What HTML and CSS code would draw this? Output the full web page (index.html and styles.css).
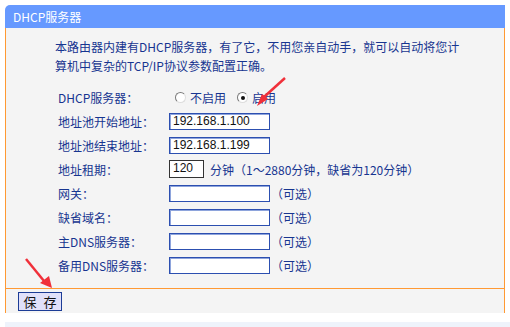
FILE: index.html
```html
<!DOCTYPE html>
<html>
<head>
<meta charset="utf-8">
<link rel="stylesheet" href="styles.css">
</head>
<body>
<div class="page">
  <div class="panel">
    <div class="head">DHCP服务器</div>
    <div class="body">
      <p class="intro">本路由器内建有DHCP服务器，有了它，不用您亲自动手，就可以自动将您计<br>算机中复杂的TCP/IP协议参数配置正确。</p>
      <div class="form">
        <div class="lbl">DHCP服务器：</div>
        <div class="ctl radios">
          <span class="radio"></span><span class="rtext">不启用</span>
          <span class="radio on"></span><span class="rtext">启用</span>
        </div>
        <div class="lbl">地址池开始地址：</div>
        <div class="ctl"><span class="inp">192.168.1.100</span></div>
        <div class="lbl">地址池结束地址：</div>
        <div class="ctl"><span class="inp">192.168.1.199</span></div>
        <div class="lbl">地址租期：</div>
        <div class="ctl"><span class="inp short">120</span><span class="note">分钟（1～2880分钟，缺省为120分钟）</span></div>
        <div class="lbl">网关：</div>
        <div class="ctl"><span class="inp"></span><span class="opt">（可选）</span></div>
        <div class="lbl">缺省域名：</div>
        <div class="ctl"><span class="inp"></span><span class="opt">（可选）</span></div>
        <div class="lbl">主DNS服务器：</div>
        <div class="ctl"><span class="inp"></span><span class="opt">（可选）</span></div>
        <div class="lbl">备用DNS服务器：</div>
        <div class="ctl"><span class="inp"></span><span class="opt">（可选）</span></div>
      </div>
    </div>
    <div class="foot"><button class="save"><span class="ch">保</span><span class="ch">存</span></button></div>
  </div>
  <div class="strip"></div>
  <svg class="arrow a1" width="40" height="36" viewBox="0 0 40 36"><path d="M33 2 L13 20 L16 23 L5 30 L10 18 L13 20 Z" fill="#f0303a"/><path d="M33 2 L12 21" stroke="#f0303a" stroke-width="2.5"/></svg>
  <svg class="arrow a2" width="40" height="40" viewBox="0 0 40 40"><path d="M4 4 L22 26" stroke="#f0303a" stroke-width="2.5"/><path d="M18 28 L27 21 L30 33 Z" fill="#f0303a"/></svg>
</div>
</body>
</html>
```
FILE: styles.css
```css
html, body { margin: 0; padding: 0; background: #fff; }
body { font-family: "Noto Sans CJK SC", "Liberation Sans", sans-serif; font-size: 12px; color: #173590; }
.page { position: relative; width: 510px; height: 327px; padding-top: 5px; box-sizing: border-box; }
.panel { margin-left: 5px; width: 500px; }
.head { height: 23px; line-height: 23px; background: #6699ff; color: #fff; padding-left: 8px; border-radius: 5px 0 0 0; font-size: 12px; }
.body { background: #f4f4f4; border-left: 1px solid #ff9933; border-right: 1px solid #ff9933; border-bottom: 1px solid #ff9933; padding: 9px 0 11px 0; }
.intro { margin: 0 0 10px 49px; line-height: 19px; }
.form { display: grid; grid-template-columns: 111px auto; grid-auto-rows: 24px; padding-left: 52px; }
.lbl, .ctl { display: flex; align-items: center; white-space: nowrap; }
.radios { padding-top: 1px; }
.radio { width: 9px; height: 9px; border-radius: 50%; border: 1px solid #7a7a7a; border-right-color: #ddd; border-bottom-color: #ddd; background: #fff; box-sizing: content-box; display: inline-flex; align-items: center; justify-content: center; margin: 0 4px 0 6px; flex: none; }
.radio.on::after { content: ""; width: 4px; height: 4px; border-radius: 50%; background: #111; }
.rtext { margin-right: 5px; font-size: 12px; }
.inp { display: inline-block; width: 96px; height: 15px; border: 1px solid #2c4fb0; box-shadow: inset 1px 1px 0 #8ea4dc; background: #fff; color: #111; font-family: "Liberation Sans", sans-serif; font-size: 12px; line-height: 15px; padding-left: 3px; box-sizing: content-box; }
.inp.short { width: 30px; height: 16px; border-color: #333; box-shadow: none; }
.note { margin-left: 6px; }
.opt { margin-left: 1px; }
.foot { background: #f4f4f4; border-left: 1px solid #ff9933; border-right: 1px solid #ff9933; height: 24px; padding: 3px 0 0 12px; box-sizing: border-box; }
.save { width: 44px; height: 19px; padding: 0; border: 1px solid #1c3c96; background: #e0e0fa; color: #111; font-family: "Noto Sans CJK SC", sans-serif; font-size: 13px; line-height: 17px; display: flex; align-items: center; justify-content: center; gap: 7px; }
.strip { margin: 9px 0 0 5px; height: 5px; background: #eef3fb; }
.arrow { position: absolute; }
.a1 { left: 252px; top: 76px; }
.a2 { left: 22px; top: 255px; }
```
